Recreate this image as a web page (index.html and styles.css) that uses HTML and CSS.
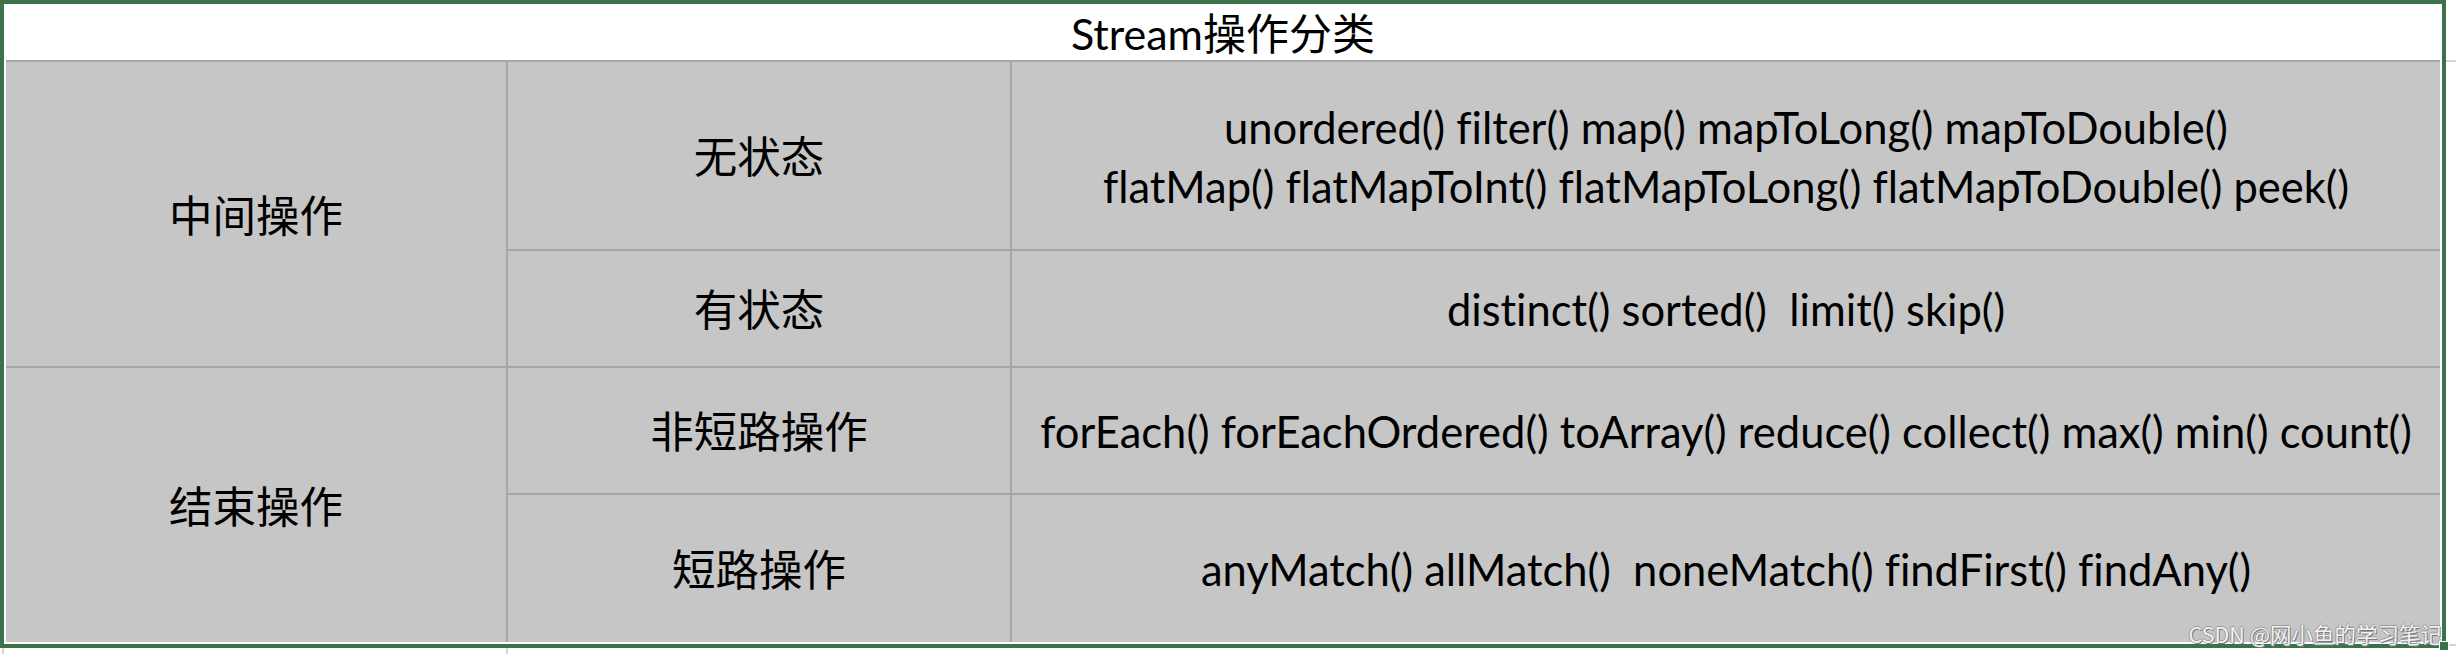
FILE: index.html
```html
<!DOCTYPE html>
<html lang="zh-CN">
<head>
<meta charset="utf-8">
<title>Stream操作分类</title>
<link rel="stylesheet" href="styles.css">
</head>
<body>
<div class="page">
  <div class="frame">
    <div class="title">Stream操作分类</div>
    <div class="grid">
      <div class="cell c1 r12">中间操作</div>
      <div class="cell c2 r1">无状态</div>
      <div class="cell c3 r1">unordered() filter() map() mapToLong() mapToDouble()<br>flatMap() flatMapToInt() flatMapToLong() flatMapToDouble() peek()</div>
      <div class="cell c2 r2">有状态</div>
      <div class="cell c3 r2">distinct() sorted()  limit() skip()</div>
      <div class="cell c1 r34">结束操作</div>
      <div class="cell c2 r3">非短路操作</div>
      <div class="cell c3 r3">forEach() forEachOrdered() toArray() reduce() collect() max() min() count()</div>
      <div class="cell c2 r4">短路操作</div>
      <div class="cell c3 r4">anyMatch() allMatch()  noneMatch() findFirst() findAny()</div>
    </div>
    <div class="watermark">CSDN @网小鱼的学习笔记</div>
    <div class="handle"></div>
  </div>
</div>
</body>
</html>
```
FILE: styles.css
```css
html, body {
  margin: 0;
  padding: 0;
  background: #ffffff;
}
body {
  width: 2456px;
  height: 654px;
  overflow: hidden;
  font-family: "Lato", "Noto Sans CJK SC", sans-serif;
  font-variant-ligatures: none;
  font-feature-settings: "liga" 0, "clig" 0;
  color: #000;
}
.page {
  width: 2456px;
  height: 654px;
  background-color: #ffffff;
  background-image:
    linear-gradient(#d4d4d4, #d4d4d4),
    linear-gradient(#d4d4d4, #d4d4d4),
    linear-gradient(#d4d4d4, #d4d4d4),
    linear-gradient(#d4d4d4, #d4d4d4);
  background-repeat: no-repeat;
  background-size: 10px 2px, 2px 6px, 2px 6px, 10px 2px;
  background-position: 2446px 60px, 2px 648px, 506px 648px, 2446px 644px;
}
.frame {
  position: relative;
  width: 2446px;
  height: 648px;
  box-sizing: border-box;
  border: 4px solid #3b724a;
  background: #ffffff;
  padding: 0 2px 2px 2px;
  display: flex;
  flex-direction: column;
}
.title {
  height: 56px;
  display: flex;
  align-items: center;
  justify-content: center;
  font-size: 43px;
  line-height: 1;
  padding-top: 2px;
  box-sizing: border-box;
}
.grid {
  display: grid;
  grid-template-columns: 500px 502px 1428px;
  grid-template-rows: 187px 115px 125px 147px;
  gap: 2px;
  padding-top: 2px;
  background: #a6a6a6;
}
.cell {
  background: #c6c6c6;
  display: flex;
  align-items: center;
  justify-content: center;
  text-align: center;
  font-size: 43.5px;
  line-height: 59px;
  white-space: pre;
  padding-top: 2px;
  box-sizing: border-box;
}
.c1 { grid-column: 1; }
.c2 { grid-column: 2; }
.c3 { grid-column: 3; }
.r1 { grid-row: 1; }
.r2 { grid-row: 2; }
.r3 { grid-row: 3; }
.r4 { grid-row: 4; }
.r12 { grid-row: 1 / span 2; }
.r34 { grid-row: 3 / span 2; }
.watermark {
  position: absolute;
  right: 0;
  bottom: -1px;
  font-family: "Noto Sans CJK SC", sans-serif;
  font-size: 21.5px;
  line-height: 22px;
  color: #f2f2f2;
  text-shadow: 1px 1px 0 #7a7a7a, -1px 0 0 #9a9a9a, 0 -1px 0 #9a9a9a;
  white-space: nowrap;
}
.handle {
  position: absolute;
  right: -7px;
  bottom: -7px;
  width: 8px;
  height: 8px;
  background: #3b724a;
  border: 1px solid #ffffff;
}
```
